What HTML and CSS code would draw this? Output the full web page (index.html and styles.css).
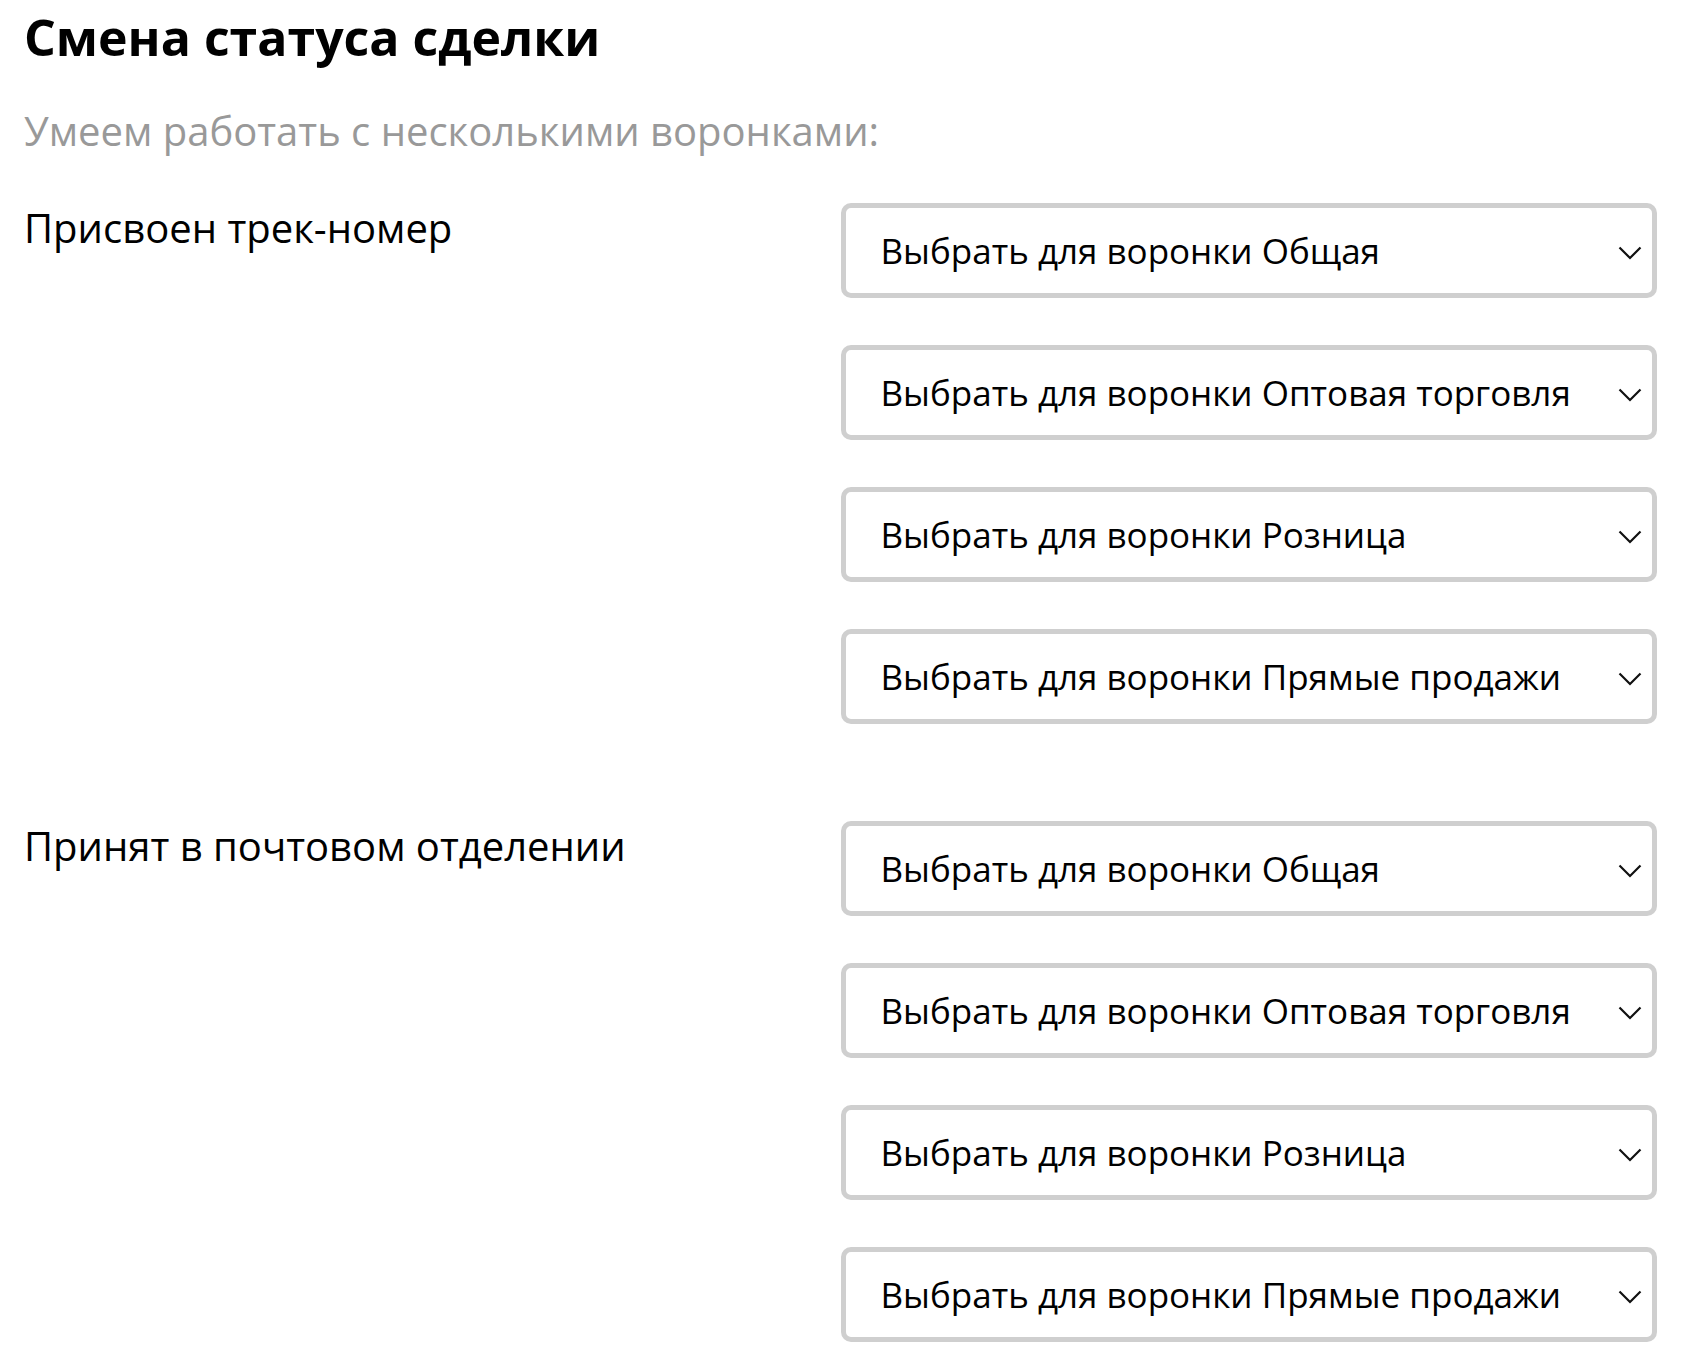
FILE: index.html
```html
<!DOCTYPE html>
<html lang="ru">
<head>
  <meta charset="UTF-8">
  <title>Смена статуса сделки</title>
  <link rel="stylesheet" href="styles.css">
</head>
<body>

  <div class="page">
    <h1 class="title">Смена статуса сделки</h1>
    <div class="subtitle">Умеем работать с несколькими воронками:</div>

    <div class="status-row">
      <div class="status-name">Присвоен трек-номер</div>
      <div class="funnels">
        <div class="select-wrap">
          <select class="funnel-select"><option>Выбрать для воронки Общая</option></select>
          <svg class="chevron" width="24" height="14" viewBox="0 0 24 14"><path d="M1.5 1.5 L12 12 L22.5 1.5" fill="none" stroke="#111" stroke-width="2.2"/></svg>
        </div>
        <div class="select-wrap">
          <select class="funnel-select"><option>Выбрать для воронки Оптовая торговля</option></select>
          <svg class="chevron" width="24" height="14" viewBox="0 0 24 14"><path d="M1.5 1.5 L12 12 L22.5 1.5" fill="none" stroke="#111" stroke-width="2.2"/></svg>
        </div>
        <div class="select-wrap">
          <select class="funnel-select"><option>Выбрать для воронки Розница</option></select>
          <svg class="chevron" width="24" height="14" viewBox="0 0 24 14"><path d="M1.5 1.5 L12 12 L22.5 1.5" fill="none" stroke="#111" stroke-width="2.2"/></svg>
        </div>
        <div class="select-wrap">
          <select class="funnel-select"><option>Выбрать для воронки Прямые продажи</option></select>
          <svg class="chevron" width="24" height="14" viewBox="0 0 24 14"><path d="M1.5 1.5 L12 12 L22.5 1.5" fill="none" stroke="#111" stroke-width="2.2"/></svg>
        </div>
      </div>
    </div>

    <div class="status-row">
      <div class="status-name">Принят в почтовом отделении</div>
      <div class="funnels">
        <div class="select-wrap">
          <select class="funnel-select"><option>Выбрать для воронки Общая</option></select>
          <svg class="chevron" width="24" height="14" viewBox="0 0 24 14"><path d="M1.5 1.5 L12 12 L22.5 1.5" fill="none" stroke="#111" stroke-width="2.2"/></svg>
        </div>
        <div class="select-wrap">
          <select class="funnel-select"><option>Выбрать для воронки Оптовая торговля</option></select>
          <svg class="chevron" width="24" height="14" viewBox="0 0 24 14"><path d="M1.5 1.5 L12 12 L22.5 1.5" fill="none" stroke="#111" stroke-width="2.2"/></svg>
        </div>
        <div class="select-wrap">
          <select class="funnel-select"><option>Выбрать для воронки Розница</option></select>
          <svg class="chevron" width="24" height="14" viewBox="0 0 24 14"><path d="M1.5 1.5 L12 12 L22.5 1.5" fill="none" stroke="#111" stroke-width="2.2"/></svg>
        </div>
        <div class="select-wrap">
          <select class="funnel-select"><option>Выбрать для воронки Прямые продажи</option></select>
          <svg class="chevron" width="24" height="14" viewBox="0 0 24 14"><path d="M1.5 1.5 L12 12 L22.5 1.5" fill="none" stroke="#111" stroke-width="2.2"/></svg>
        </div>
      </div>
    </div>
  </div>

</body>
</html>
```

FILE: styles.css
```css
body {
  margin: 0;
  font-family: "Open Sans", Arial, sans-serif;
  color: #000;
  background: #fff;
}

.page {
  padding: 0 33px 0 24px;
}

.title {
  font-size: 50px;
  font-weight: 700;
  line-height: 1.2;
  margin: 7px 0 0;
}

.subtitle {
  font-size: 40px;
  color: #999;
  margin-top: 36px;
  line-height: 1.4;
}

.status-row {
  display: grid;
  grid-template-columns: 1fr 1fr;
  margin-top: 44px;
}

.status-row + .status-row {
  margin-top: 97px;
}

.status-name {
  font-size: 40px;
  line-height: 1.4;
  margin-top: -3px;
}

.funnels {
  display: flex;
  flex-direction: column;
  gap: 47px;
}

.select-wrap {
  position: relative;
}

.funnel-select {
  appearance: none;
  -webkit-appearance: none;
  width: 100%;
  height: 95px;
  border: 5px solid #cfcfcf;
  border-radius: 10px;
  background: #fff;
  padding: 0 60px 0 35px;
  font-family: "Open Sans", Arial, sans-serif;
  font-size: 35px;
  color: #000;
}

.chevron {
  position: absolute;
  right: 15px;
  top: 43px;
}
```
